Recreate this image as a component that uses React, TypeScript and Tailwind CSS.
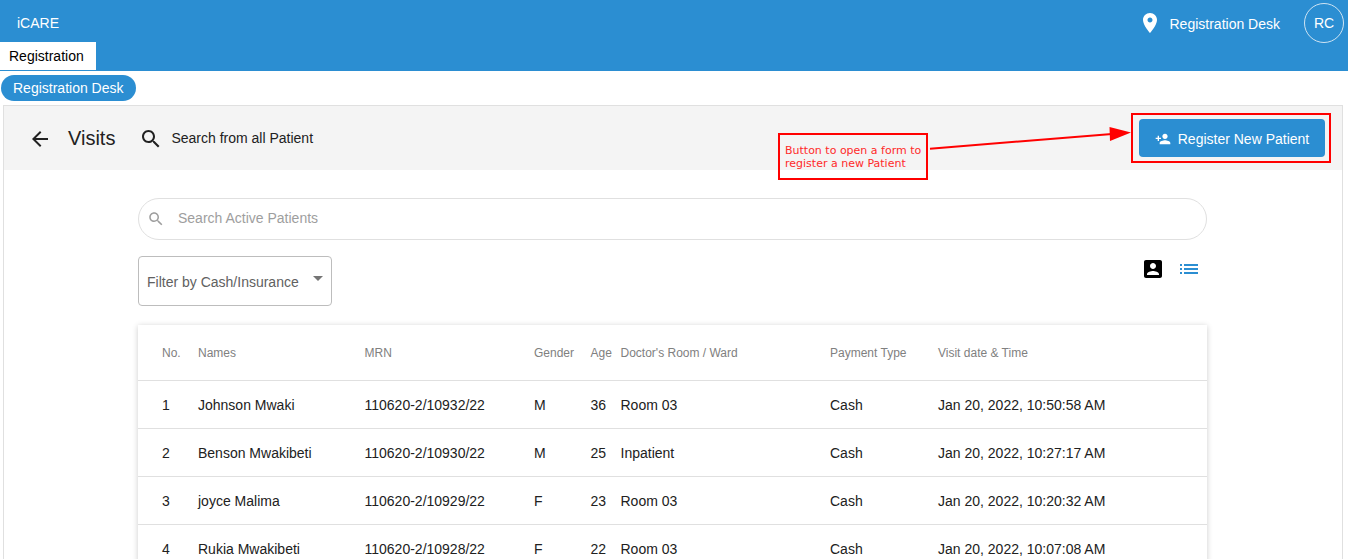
const BLUE = "bg-[#2b8ed2]";

function Icon({ d, className }: { d: string; className: string }) {
  return (
    <svg viewBox="0 0 24 24" fill="currentColor" className={className}>
      <path d={d} />
    </svg>
  );
}

const icons = {
  back: "M20 11H7.83l5.59-5.59L12 4l-8 8 8 8 1.41-1.41L7.83 13H20v-2z",
  search:
    "M15.5 14h-.79l-.28-.27C15.41 12.59 16 11.11 16 9.5 16 5.91 13.09 3 9.5 3S3 5.91 3 9.5 5.91 16 9.5 16c1.61 0 3.09-.59 4.23-1.57l.27.28v.79l5 4.99L20.49 19l-4.99-5zm-6 0C7.01 14 5 11.99 5 9.5S7.01 5 9.5 5 14 7.01 14 9.5 11.99 14 9.5 14z",
  place:
    "M12 2C8.13 2 5 5.13 5 9c0 5.25 7 13 7 13s7-7.75 7-13c0-3.87-3.13-7-7-7zm0 9.5c-1.38 0-2.5-1.12-2.5-2.5s1.12-2.5 2.5-2.5 2.5 1.12 2.5 2.5-1.12 2.5-2.5 2.5z",
  personAdd:
    "M15 12c2.21 0 4-1.79 4-4s-1.79-4-4-4-4 1.79-4 4 1.79 4 4 4zm-9-2V7H4v3H1v2h3v3h2v-3h3v-2H6zm9 4c-2.67 0-8 1.34-8 4v2h16v-2c0-2.66-5.33-4-8-4z",
  accountBox:
    "M3 5v14c0 1.1.89 2 2 2h14c1.1 0 2-.9 2-2V5c0-1.1-.9-2-2-2H5c-1.11 0-2 .9-2 2zm12 4c0 1.66-1.34 3-3 3s-3-1.34-3-3 1.34-3 3-3 3 1.34 3 3zm-9 8c0-2 4-3.1 6-3.1s6 1.1 6 3.1v1H6v-1z",
  list: "M3 13h2v-2H3v2zm0 4h2v-2H3v2zm0-8h2V7H3v2zm4 4h14v-2H7v2zm0 4h14v-2H7v2zM7 7v2h14V7H7z",
};

const visits = [
  { no: 1, name: "Johnson Mwaki", mrn: "110620-2/10932/22", gender: "M", age: 36, room: "Room 03", time: "Jan 20, 2022, 10:50:58 AM" },
  { no: 2, name: "Benson Mwakibeti", mrn: "110620-2/10930/22", gender: "M", age: 25, room: "Inpatient", time: "Jan 20, 2022, 10:27:17 AM" },
  { no: 3, name: "joyce Malima", mrn: "110620-2/10929/22", gender: "F", age: 23, room: "Room 03", time: "Jan 20, 2022, 10:20:32 AM" },
  { no: 4, name: "Rukia Mwakibeti", mrn: "110620-2/10928/22", gender: "F", age: 22, room: "Room 03", time: "Jan 20, 2022, 10:07:08 AM" },
];

const columns = "grid grid-cols-[36px_166.5px_169.5px_56.5px_30px_209.5px_108px_1fr] pl-6 items-center";

export default function App() {
  return (
    <div className="relative h-screen overflow-hidden bg-white font-['Liberation_Sans',Arial,sans-serif] text-[14px] text-[#212121]">
      <header className={`${BLUE} h-[71px] flex flex-col text-white`}>
        <div className="h-[42px] pt-[4px] flex items-center justify-between">
          <span className="pl-[17px] text-[14px]">iCARE</span>
          <div className="flex items-center pr-[4px]">
            <Icon d={icons.place} className="w-6 h-6 mr-[8px]" />
            <span className="mr-[24px] pt-[2px]">Registration Desk</span>
            <div className="w-[40px] h-[40px] -mt-[1px] pt-[2px] rounded-full border border-[#cfe4f3] flex items-center justify-center">RC</div>
          </div>
        </div>
        <div className="h-[28px] w-[96px] bg-white text-black pl-[9px] flex items-center">Registration</div>
      </header>

      <div className="h-[34px] pl-px pt-[4px]">
        <span className={`${BLUE} inline-flex items-center h-[26px] px-3 rounded-full text-white`}>Registration Desk</span>
      </div>

      <main className="ml-[3px] mr-[5px] border border-[#e0e0e0]">
        <div className="h-[64px] bg-[#f4f4f4] flex items-center pl-[24px] pr-[17px]">
          <Icon d={icons.back} className="w-6 h-6 mt-[2px]" />
          <h1 className="ml-[16px] text-[20px] text-[#212121]">Visits</h1>
          <Icon d={icons.search} className="w-6 h-6 ml-[24px] mt-[2px]" />
          <span className="ml-[8px]">Search from all Patient</span>
          <button className={`${BLUE} ml-auto w-[186px] h-[38px] rounded-[4px] text-white flex items-center justify-center gap-[7px]`}>
            <Icon d={icons.personAdd} className="w-[16px] h-[16px] mt-[2px]" />
            <span className="pt-[2px]">Register New Patient</span>
          </button>
        </div>

        <div className="pl-[134px] pr-[135px] pt-[28px]">
          <div className="h-[42px] rounded-full border border-[#e0e0e0] flex items-center pl-[8px] pb-[2px] text-[#9e9e9e]">
            <Icon d={icons.search} className="w-[18px] h-[18px] mt-[2px] text-[#9e9e9e]" />
            <span className="ml-[13px]">Search Active Patients</span>
          </div>

          <div className="flex justify-between mt-[16px]">
            <div className="relative w-[194px] h-[50px] rounded-[4px] border border-[#bdbdbd] flex items-center pl-[8px] pt-[3px] text-[#616161]">
              Filter by Cash/Insurance
              <span className="absolute right-[8px] top-[19px] border-x-[5px] border-x-transparent border-t-[5px] border-t-[#757575]" />
            </div>
            <div className="flex gap-[12px] pr-[6px] pt-[1px]">
              <Icon d={icons.accountBox} className="w-6 h-6 text-black" />
              <Icon d={icons.list} className="w-6 h-6 text-[#2b8ed2]" />
            </div>
          </div>

          <div className="mt-[19px] bg-white shadow-[0_1px_6px_rgba(0,0,0,0.2)]">
            <div className={`${columns} h-[56px] text-[12px] text-[#808080] border-b border-[#e0e0e0]`}>
              <span>No.</span>
              <span>Names</span>
              <span>MRN</span>
              <span>Gender</span>
              <span>Age</span>
              <span>Doctor's Room / Ward</span>
              <span>Payment Type</span>
              <span>Visit date &amp; Time</span>
            </div>
            {visits.map((v) => (
              <div key={v.no} className={`${columns} h-[48px] pt-[2px] border-b border-[#e0e0e0]`}>
                <span>{v.no}</span>
                <span>{v.name}</span>
                <span>{v.mrn}</span>
                <span>{v.gender}</span>
                <span>{v.age}</span>
                <span>{v.room}</span>
                <span>Cash</span>
                <span>{v.time}</span>
              </div>
            ))}
          </div>
        </div>
      </main>

      {/* annotation drawn over the screenshot */}
      <div className="absolute left-[1131px] top-[113px] w-[200px] h-[50px] border-2 border-[#ff0000]" />
      <div className="absolute left-[778px] top-[133px] w-[150px] h-[47px] border-2 border-[#ff0000] pl-[5px] pt-[9px] font-['DejaVu_Sans',sans-serif] text-[11px] leading-[13px] text-[#ff2a2a]">
        Button to open a form to
        <br />
        register a new Patient
      </div>
      <svg className="absolute left-[920px] top-[120px] w-[220px] h-[40px]" viewBox="0 0 220 40">
        <line x1="10" y1="28.7" x2="192" y2="14" stroke="#ff0000" strokeWidth="2" />
        <polygon points="189.5,7 190,21 211,12.5" fill="#ff0000" />
      </svg>
    </div>
  );
}
